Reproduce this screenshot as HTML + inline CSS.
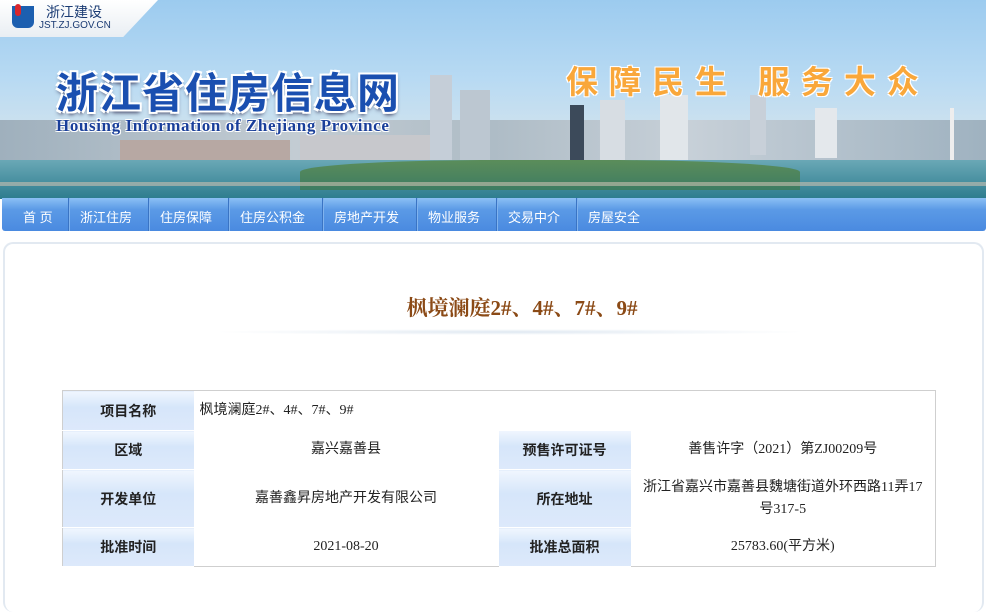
<!DOCTYPE html>
<html><head><meta charset="utf-8"><style>
*{margin:0;padding:0;box-sizing:border-box}
body{width:986px;height:595px;overflow:hidden;background:#fff;font-family:"Liberation Sans","Noto Sans CJK SC",sans-serif;position:relative}
.banner{position:absolute;left:0;top:0;width:986px;height:199px;background:linear-gradient(180deg,#9ccbef 0%,#b8daf3 40%,#c9e0ef 60%,#a9c6d6 75%,#7ea7a4 88%,#4c8a95 100%);overflow:hidden}
.logo{position:absolute;left:0;top:0;width:158px;height:37px;background:linear-gradient(#fff,#e9eef3);clip-path:polygon(0 0,100% 0,78% 100%,0 100%)}
.logo .ic{position:absolute;left:12px;top:6px;width:22px;height:22px;background:#1c5fb0;border-radius:0 0 6px 6px}
.logo .ic:before{content:"";position:absolute;left:3px;top:-2px;width:6px;height:12px;background:#d9262c;border-radius:3px}
.logo .t1{position:absolute;left:46px;top:2px;font-size:14px;color:#1a3b73}
.logo .t2{position:absolute;left:39px;top:20px;font-size:10px;color:#1a3b73}
.title{position:absolute;left:56px;top:60px;font-size:42px;font-weight:bold;color:#1a4fb0;letter-spacing:1px;text-shadow:2px 2px 0 #fff,-2px -2px 0 #fff,2px -2px 0 #fff,-2px 2px 0 #fff,0 3px 4px #335}
.sub{position:absolute;left:56px;top:116px;font-family:"Liberation Serif",serif;font-size:17px;letter-spacing:.6px;font-weight:bold;color:#1a3f9a;text-shadow:1px 1px 0 #fff,-1px -1px 0 #fff,1px -1px 0 #fff,-1px 1px 0 #fff}
.slogan{position:absolute;left:566px;top:57px;font-size:32px;font-weight:bold;color:#f9a73a;letter-spacing:11px;text-shadow:1px 1px 0 #fff,-1px -1px 0 #fff,1px -1px 0 #fff,-1px 1px 0 #fff}
.b{position:absolute;background:#d7dde3}
.city{position:absolute;left:0;top:120px;width:986px;height:45px;background:linear-gradient(90deg,#9fb0bd,#c3ccd3 30%,#aebcc6 50%,#c7d0d8 70%,#9fb2c0)}
.river{position:absolute;left:0;top:160px;width:986px;height:39px;background:linear-gradient(#6aa8b6,#2d7c8e)}
.nav{position:absolute;left:2px;top:198px;width:984px;height:33px;background:linear-gradient(#8cc0f5 0%,#5b9ae6 35%,#4a8ae0 100%);border-radius:0 0 3px 3px}
.nav span{position:absolute;top:9px;color:#fff;font-size:13px}
.nav i{position:absolute;top:0;width:1px;height:33px;background:#3a74c4;box-shadow:1px 0 0 #80b3ee}
.box{position:absolute;left:3px;top:242px;width:981px;height:370px;border:2px solid #e2e9f1;border-radius:10px;border-bottom:none}
h1{position:absolute;left:0;width:986px;top:292px;text-align:center;font-family:"Liberation Serif","Noto Serif CJK SC",serif;font-size:21px;color:#8b4a16;font-weight:bold;padding-left:58px}
.line{position:absolute;left:210px;top:329px;width:600px;height:6px;background:radial-gradient(ellipse at center,#dfe8f1 0%,rgba(255,255,255,0) 70%)}
table{position:absolute;left:62px;top:390px;width:874px;border-collapse:collapse;border:1px solid #cfcfcf;font-size:14px;color:#222}
td{text-align:center;padding:0 4px;border:none}
td.l{width:131px;background:linear-gradient(#f0f6fe,#d6e6fa 40%,#dde9fb);font-weight:bold;border-bottom:1px solid #fff;font-family:"Liberation Sans","Noto Sans CJK SC",sans-serif}
td.v{font-family:"Liberation Serif","Noto Sans CJK SC",serif;line-height:22px}
</style></head><body>
<div class="banner">
 <div class="city"></div>
 <div class="b" style="left:430px;top:75px;width:22px;height:90px;background:#c5ced8"></div>
 <div class="b" style="left:460px;top:90px;width:30px;height:75px;background:#bcc7d1"></div>
 <div class="b" style="left:570px;top:105px;width:14px;height:55px;background:#3c4a5a"></div>
 <div class="b" style="left:600px;top:100px;width:25px;height:60px"></div>
 <div class="b" style="left:660px;top:95px;width:28px;height:65px;background:#e1e6ea"></div>
 <div class="b" style="left:750px;top:95px;width:16px;height:60px;background:#c8d0d9"></div>
 <div class="b" style="left:815px;top:108px;width:22px;height:50px;background:#e4e8ec"></div>
 <div class="b" style="left:120px;top:140px;width:170px;height:25px;background:#b7a8a3"></div>
 <div class="b" style="left:300px;top:135px;width:130px;height:30px;background:#c7c8cc"></div>
 <div class="b" style="left:950px;top:108px;width:4px;height:60px;background:#eee"></div>
 <div class="river"></div>
 <div class="b" style="left:300px;top:160px;width:500px;height:30px;background:linear-gradient(#5b8d5a,#3e7c62);border-radius:40% 40% 0 0"></div>
 <div class="b" style="left:0;top:182px;width:986px;height:4px;background:#c9c0b1;opacity:.6"></div>
 <div class="logo"><div class="ic"></div><div class="t1">浙江建设</div><div class="t2">JST.ZJ.GOV.CN</div></div>
 <div class="title">浙江省住房信息网</div>
 <div class="sub">Housing Information of Zhejiang Province</div>
 <div class="slogan">保障民生 服务大众</div>
</div>
<div class="nav">
 <span style="left:21px">首 页</span><i style="left:66px"></i>
 <span style="left:78px">浙江住房</span><i style="left:146px"></i>
 <span style="left:158px">住房保障</span><i style="left:226px"></i>
 <span style="left:238px">住房公积金</span><i style="left:320px"></i>
 <span style="left:332px">房地产开发</span><i style="left:414px"></i>
 <span style="left:426px">物业服务</span><i style="left:494px"></i>
 <span style="left:506px">交易中介</span><i style="left:574px"></i>
 <span style="left:586px">房屋安全</span>
</div>
<div class="box"></div>
<h1>枫境澜庭2#、4#、7#、9#</h1>
<div class="line"></div>
<table>
<tr style="height:40px"><td class="l">项目名称</td><td class="v" colspan="3" style="text-align:left;padding-left:6px">枫境澜庭2#、4#、7#、9#</td></tr>
<tr style="height:39px"><td class="l">区域</td><td class="v" style="width:305px">嘉兴嘉善县</td><td class="l" style="width:132px">预售许可证号</td><td class="v">善售许字（2021）第ZJ00209号</td></tr>
<tr style="height:58px"><td class="l">开发单位</td><td class="v">嘉善鑫昇房地产开发有限公司</td><td class="l">所在地址</td><td class="v" style="padding:0 10px">浙江省嘉兴市嘉善县魏塘街道外环西路11弄17<br>号317-5</td></tr>
<tr style="height:39px"><td class="l">批准时间</td><td class="v">2021-08-20</td><td class="l">批准总面积</td><td class="v">25783.60(平方米)</td></tr>
</table>
</body></html>
